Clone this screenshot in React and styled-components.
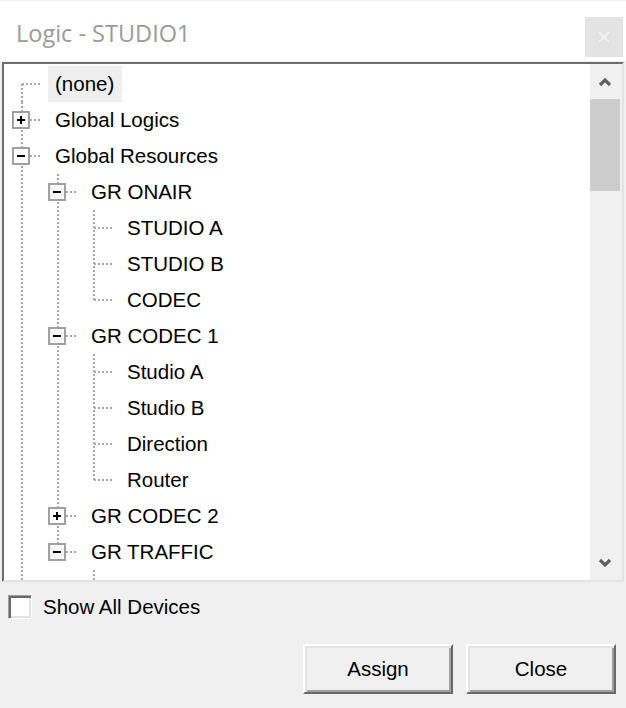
import React from "react";
import styled, { createGlobalStyle, css } from "styled-components";

const GlobalStyle = createGlobalStyle`
  html, body {
    margin: 0;
    padding: 0;
    background: #f0f0f0;
  }
  body {
    font-family: "Liberation Sans", Arial, sans-serif;
    color: #000;
  }
`;

const tree = [
  { label: "(none)", selected: true },
  { label: "Global Logics", open: false, children: [{ label: "Logic 1" }] },
  {
    label: "Global Resources",
    open: true,
    children: [
      {
        label: "GR ONAIR",
        open: true,
        children: [{ label: "STUDIO A" }, { label: "STUDIO B" }, { label: "CODEC" }],
      },
      {
        label: "GR CODEC 1",
        open: true,
        children: [
          { label: "Studio A" },
          { label: "Studio B" },
          { label: "Direction" },
          { label: "Router" },
        ],
      },
      { label: "GR CODEC 2", open: false, children: [{ label: "Studio A" }] },
      {
        label: "GR TRAFFIC",
        open: true,
        children: [{ label: "TRAFFIC A" }, { label: "TRAFFIC B" }],
      },
    ],
  },
  { label: "Local Logics", open: false, children: [{ label: "Logic 1" }] },
];

// rows that fit in the list before it is scrolled
const VISIBLE_ROWS = 15;

// flatten the tree into rows, each with the guide cells it needs
function flatten(nodes, depth = 0, pipes = [], out = []) {
  nodes.forEach((node, i) => {
    const isLast = i === nodes.length - 1;
    const isFirstRoot = depth === 0 && i === 0;
    const guides = pipes.map((p) => (p ? "pipe" : "blank"));
    guides.push(isFirstRoot ? "first" : isLast ? "elbow" : "tee");
    const hasKids = !!(node.children && node.children.length);
    out.push({ ...node, depth, guides, hasKids });
    if (hasKids && node.open) flatten(node.children, depth + 1, [...pipes, !isLast], out);
  });
  return out;
}

const dotsV = "repeating-linear-gradient(to bottom, #a8a8a8 0 2px, transparent 2px 4px)";
const dotsH = "repeating-linear-gradient(to right, #a8a8a8 0 2px, transparent 2px 4px)";

const Dialog = styled.div`
  width: 626px;
  height: 708px;
  display: flex;
  flex-direction: column;
  background: #f0f0f0;
  overflow: hidden;
`;

const TitleBar = styled.div`
  height: 60px;
  margin-top: 1px;
  background: #fff;
  display: flex;
  align-items: flex-start;
  justify-content: space-between;
  padding: 0 3px 0 16px;
`;

const Title = styled.div`
  font-family: "Open Sans", "Liberation Sans", sans-serif;
  font-size: 23.5px;
  color: #9a9a9a;
  margin-top: 16px;
  line-height: 32px;
`;

const CloseBtn = styled.div`
  width: 38px;
  height: 40px;
  margin-top: 16px;
  background: #e3e3e3;
  display: flex;
  align-items: center;
  justify-content: center;
`;

const TreeBox = styled.div`
  margin: 1px 2px 0;
  height: 516px;
  border: 2px solid;
  border-color: #6d6d6d #e3e3e3 #e3e3e3 #6d6d6d;
  background: #fff;
  display: flex;
`;

const TreeList = styled.div`
  flex: 1;
  overflow: hidden;
  padding-top: 2px;
`;

const Row = styled.div`
  display: flex;
  height: 36px;
  align-items: stretch;
`;

const Guide = styled.div`
  position: relative;
  width: 36px;
  flex: none;

  &::before {
    content: "";
    position: absolute;
    left: 17px;
    width: 2px;
    background: ${dotsV};
    ${({ $kind }) =>
      $kind === "pipe" || $kind === "tee"
        ? css`top: 0; bottom: 0;`
        : $kind === "elbow"
        ? css`top: 0; height: 18px;`
        : $kind === "first"
        ? css`top: 18px; bottom: 0;`
        : css`display: none;`}
  }

  &::after {
    content: "";
    position: absolute;
    left: 18px;
    right: 0;
    top: 17px;
    height: 2px;
    background: ${dotsH};
    display: ${({ $kind }) => ($kind === "pipe" || $kind === "blank" ? "none" : "block")};
  }
`;

const Expander = styled.div`
  position: absolute;
  left: 8px;
  top: 9px;
  width: 18px;
  height: 18px;
  box-sizing: border-box;
  border: 2px solid #a0a0a0;
  background: #fff;
  z-index: 1;

  &::before {
    content: "";
    position: absolute;
    left: 3px;
    top: 6px;
    width: 8px;
    height: 2px;
    background: #000;
  }

  &::after {
    content: "";
    position: absolute;
    left: 6px;
    top: 3px;
    width: 2px;
    height: 8px;
    background: #000;
    display: ${({ $open }) => ($open ? "none" : "block")};
  }
`;

const Label = styled.div`
  margin-left: 8px;
  padding: 0 8px 0 7px;
  font-size: 20.5px;
  line-height: 36px;
  white-space: nowrap;
  background: ${({ $selected }) => ($selected ? "#efefef" : "transparent")};
`;

const ScrollBar = styled.div`
  width: 32px;
  flex: none;
  background: #f0f0f0;
  display: flex;
  flex-direction: column;
`;

const Arrow = styled.div`
  height: 35px;
  flex: none;
  display: flex;
  align-items: center;
  justify-content: center;
  padding-right: 2px;
`;

const Track = styled.div`
  flex: 1;
  padding: 0 2px 0 0;
`;

const Thumb = styled.div`
  height: 92px;
  background: #cdcdcd;
`;

const CheckRow = styled.label`
  display: flex;
  align-items: center;
  gap: 11px;
  margin: 12px 0 0 8px;
  font-size: 20.5px;
  height: 26px;
`;

const CheckBox = styled.span`
  width: 24px;
  height: 24px;
  box-sizing: border-box;
  border: 1px solid;
  border-color: #a0a0a0 #fff #fff #a0a0a0;
  box-shadow: inset 2px 2px #696969, inset -2px -2px #e3e3e3;
  background: #fff;
`;

const ButtonRow = styled.div`
  display: flex;
  justify-content: flex-end;
  gap: 13px;
  padding-right: 10px;
  margin-top: 24px;
`;

const Button = styled.button`
  width: 150px;
  height: 50px;
  box-sizing: border-box;
  border: 2px solid;
  border-color: #fff #696969 #696969 #fff;
  box-shadow: inset 2px 2px #e3e3e3, inset -2px -2px #a0a0a0;
  background: #f0f0f0;
  font-family: "Liberation Sans", Arial, sans-serif;
  font-size: 20.5px;
  color: #000;
  padding: 0;
`;

const Chevron = ({ down }) => (
  <svg width="14" height="10" viewBox="0 0 14 10">
    <path
      d={down ? "M2 2 L7 7 L12 2" : "M2 8 L7 3 L12 8"}
      fill="none"
      stroke="#606060"
      strokeWidth="3.2"
    />
  </svg>
);

export default function App() {
  const rows = flatten(tree).slice(0, VISIBLE_ROWS);
  return (
    <Dialog>
      <GlobalStyle />
      <TitleBar>
        <Title>Logic - STUDIO1</Title>
        <CloseBtn>
          <svg width="12" height="12" viewBox="0 0 12 12">
            <path d="M1 1 L11 11 M11 1 L1 11" stroke="#f7f7f7" strokeWidth="1.6" />
          </svg>
        </CloseBtn>
      </TitleBar>
      <TreeBox>
        <TreeList>
          {rows.map((r, i) => (
            <Row key={i}>
              {r.guides.map((g, j) => (
                <Guide key={j} $kind={g}>
                  {j === r.depth && r.hasKids && <Expander $open={r.open} />}
                </Guide>
              ))}
              <Label $selected={r.selected}>{r.label}</Label>
            </Row>
          ))}
        </TreeList>
        <ScrollBar>
          <Arrow>
            <Chevron />
          </Arrow>
          <Track>
            <Thumb />
          </Track>
          <Arrow>
            <Chevron down />
          </Arrow>
        </ScrollBar>
      </TreeBox>
      <CheckRow>
        <CheckBox />
        Show All Devices
      </CheckRow>
      <ButtonRow>
        <Button>Assign</Button>
        <Button>Close</Button>
      </ButtonRow>
    </Dialog>
  );
}
